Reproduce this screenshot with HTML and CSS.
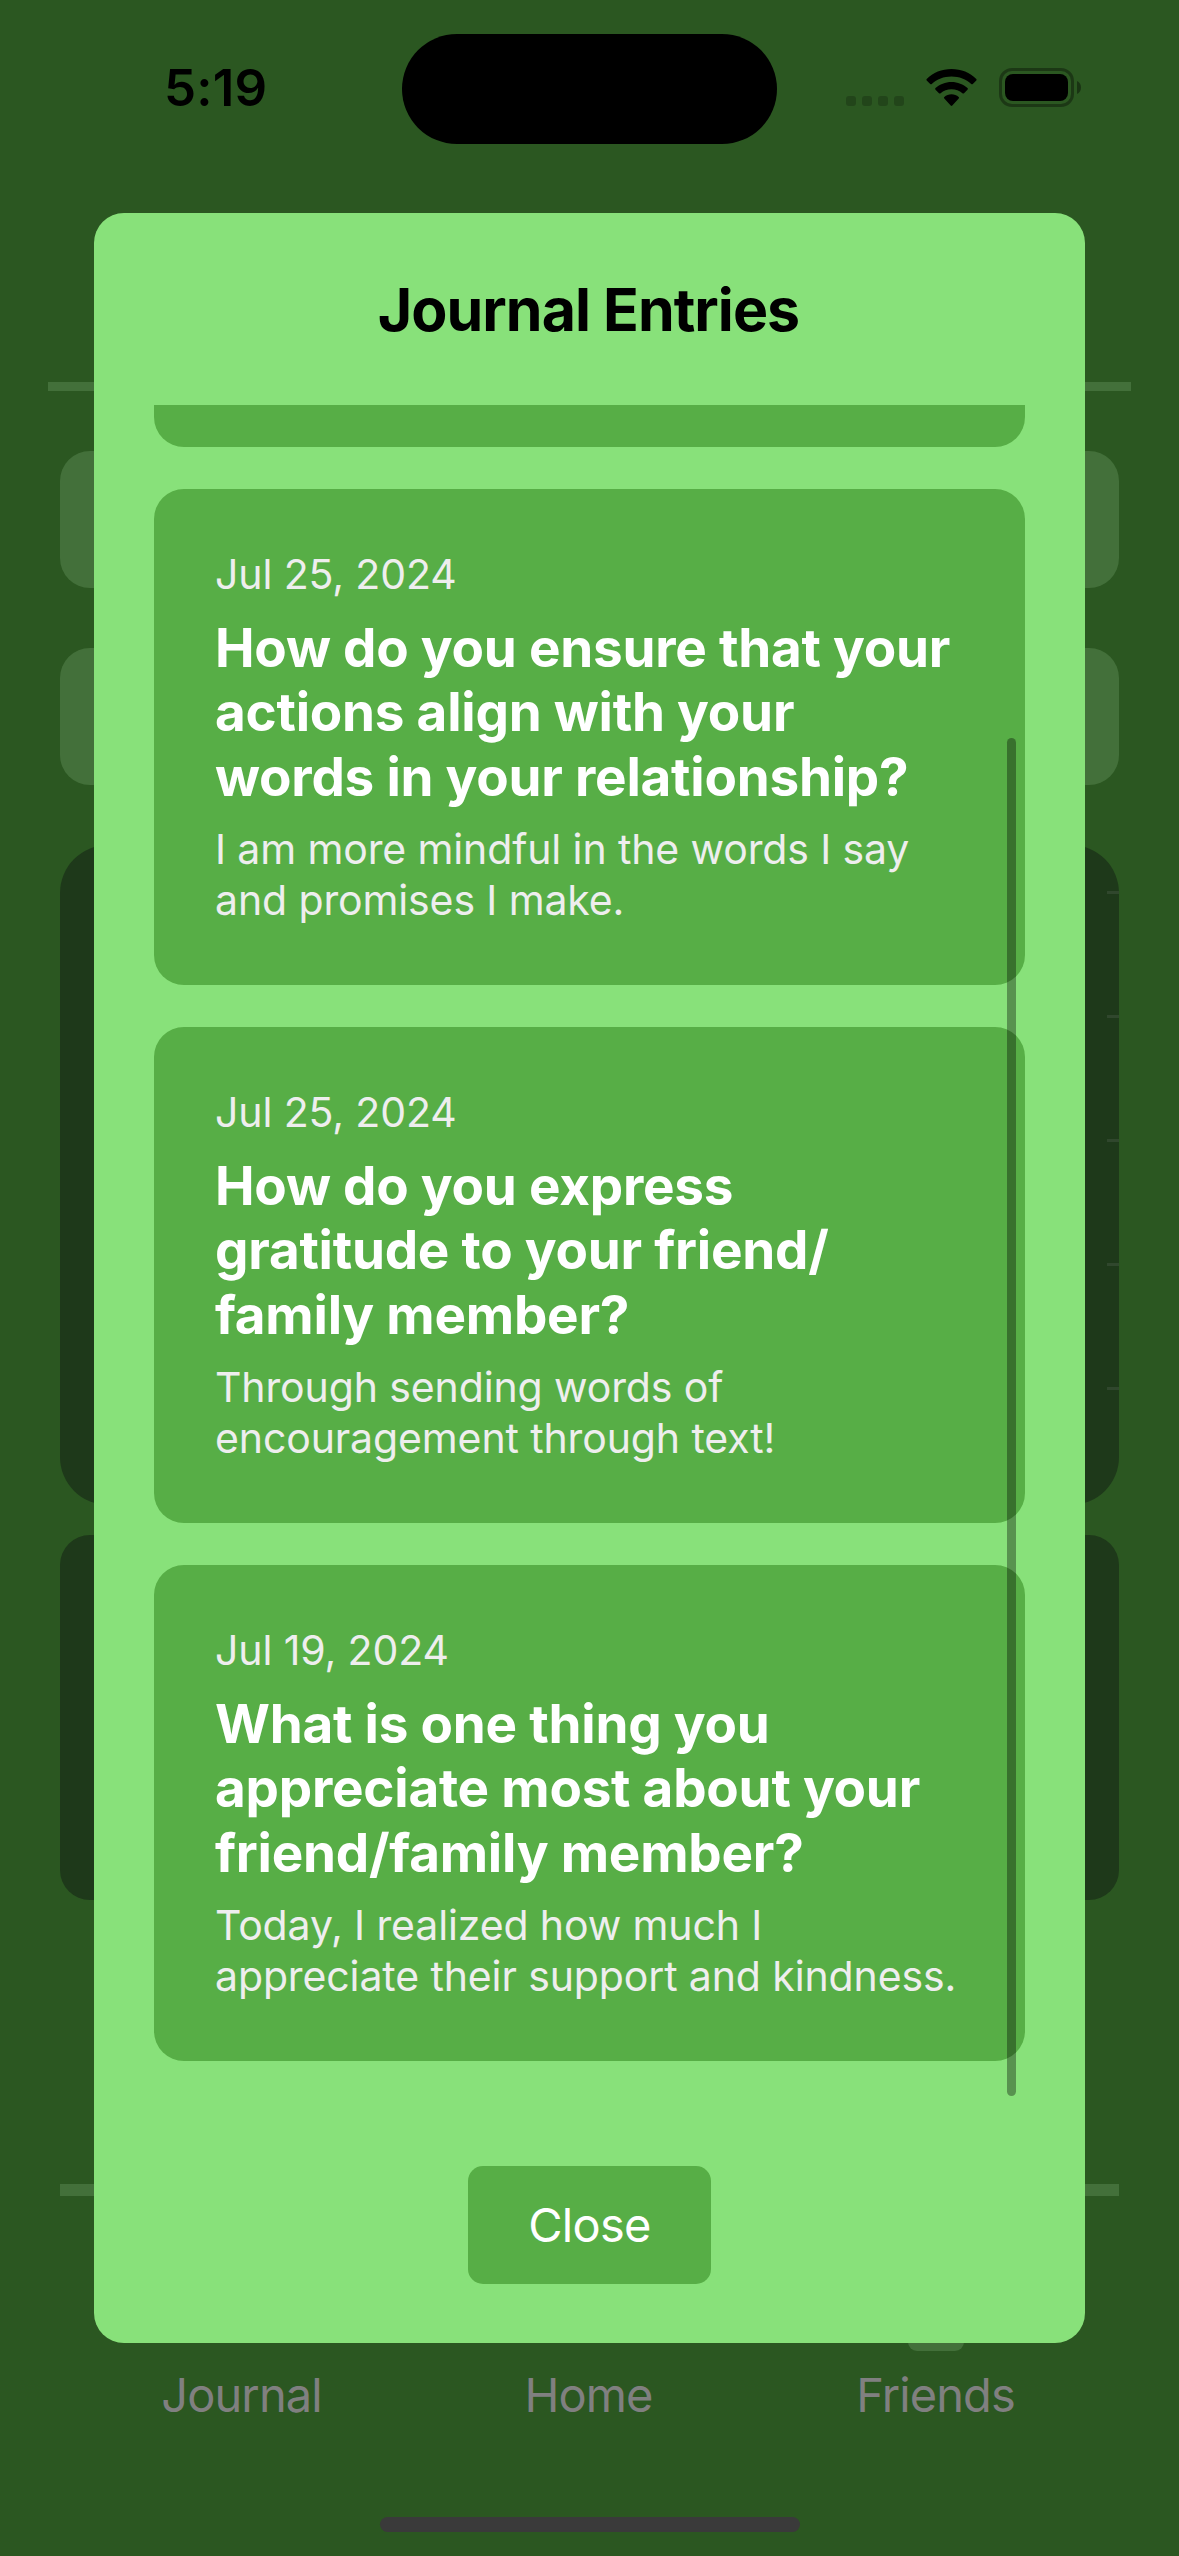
FILE: index.html
```
<!DOCTYPE html>
<html lang="en">
<head>
<meta charset="utf-8">
<title>Journal Entries</title>
<link rel="stylesheet" href="styles.css">
</head>
<body>
<div class="screen">
  <header class="status">
    <div class="status-time">5:19</div>
    <div class="island"></div>
    <div class="status-icons">
      <svg class="dots" width="58" height="10" viewBox="0 0 58 10"><rect width="10" height="10" rx="3"/><rect x="16" width="10" height="10" rx="3"/><rect x="32" width="10" height="10" rx="3"/><rect x="48" width="10" height="10" rx="3"/></svg>
      <svg class="wifi" width="51" height="38" viewBox="0 0 51 38">
        <path d="M25.5 0C35.2 0 44 3.7 50.300 9.900Q51 10.700 50.300 11.500L46.800 15Q46 15.700 45.200 15C40.100 10.200 33.200 7.500 25.500 7.500S10.900 10.200 5.800 15Q5 15.700 4.200 15L.7 11.500Q0 10.700.7 9.900C7 3.700 15.800 0 25.500 0Z"/>
        <path d="M25.500 12.900C31.700 12.900 37.300 15.200 41.500 19.100Q42.300 19.900 41.500 20.700L38 24.200Q37.200 24.900 36.400 24.200C33.500 21.700 29.700 20.200 25.500 20.200S17.500 21.700 14.600 24.200Q13.800 24.900 13 24.200L9.500 20.700Q8.700 19.900 9.500 19.100C13.700 15.200 19.300 12.900 25.500 12.900Z"/>
        <path d="M25.500 25.200C28.200 25.200 30.700 26.200 32.700 27.900Q33.500 28.700 32.700 29.500L26.300 36.600Q25.500 37.400 24.700 36.600L18.300 29.500Q17.500 28.700 18.300 27.900C20.300 26.200 22.800 25.200 25.500 25.200Z"/>
      </svg>
      <svg class="battery" width="82" height="39" viewBox="0 0 82 39">
        <rect class="battery-shell" x="1.500" y="1.500" width="72" height="36" rx="11.500"/>
        <path class="battery-tip" d="M78 13C80.500 14 82 16.500 82 19.500S80.500 25 78 26Z"/>
        <rect x="6" y="6" width="63" height="27" rx="8"/>
      </svg>
    </div>
  </header>

  <main class="page">
    <div class="rule rule-top"></div>
    <div class="field"></div>
    <div class="field"></div>
    <div class="chart"><i class="tick"></i><i class="tick"></i><i class="tick"></i><i class="tick"></i><i class="tick"></i></div>
    <div class="panel"></div>
    <div class="rule rule-bottom"></div>
  </main>

  <nav class="tabs">
    <div class="tab"><span>Journal</span></div>
    <div class="tab"><span>Home</span></div>
    <div class="tab"><i class="tab-icon"></i><span>Friends</span></div>
  </nav>
  <div class="home-indicator"></div>

  <section class="modal">
    <h1 class="modal-title">Journal Entries</h1>
    <div class="entries">
      <article class="entry entry-cut"></article>
      <article class="entry">
        <p class="date">Jul 25, 2024</p>
        <h2 class="question">How do you ensure that your<br>actions align with your<br>words in your relationship?</h2>
        <p class="answer">I am more mindful in the words I say<br>and promises I make.</p>
      </article>
      <article class="entry">
        <p class="date">Jul 25, 2024</p>
        <h2 class="question">How do you express<br>gratitude to your friend/<br>family member?</h2>
        <p class="answer">Through sending words of<br>encouragement through text!</p>
      </article>
      <article class="entry">
        <p class="date">Jul 19, 2024</p>
        <h2 class="question">What is one thing you<br>appreciate most about your<br>friend/family member?</h2>
        <p class="answer">Today, I realized how much I<br>appreciate their support and kindness.</p>
      </article>
      <div class="scrollbar"></div>
    </div>
    <button class="close">Close</button>
  </section>
</div>
</body>
</html>
```
FILE: styles.css
```
* { box-sizing: border-box; margin: 0; padding: 0; }
body { background: #2b5721; font-family: Inter, "Liberation Sans", sans-serif; }

.screen {
  position: relative;
  display: flex;
  flex-direction: column;
  width: 1179px;
  height: 2556px;
  overflow: hidden;
  background: #2b5721;
}

/* Status bar */
.status {
  display: grid;
  grid-template-columns: 401px 377px 401px;
  height: 382px;
  padding-top: 33px;
  align-items: start;
}
.status-time {
  padding: 25px 0 0 164px;
  font-size: 51px;
  font-weight: 600;
  line-height: 60px;
  letter-spacing: 0.2px;
}
.island { height: 110px; margin: 1px 1px 0; border-radius: 55px; background: #000; }
.status-icons { display: flex; align-items: flex-end; height: 74px; padding-left: 68px; }
.status-icons svg { display: block; flex: none; }
.dots { margin-bottom: 1px; opacity: 0.2; }
.wifi { margin-left: 22px; }
.battery { margin-left: 22px; }
.battery-shell { fill: none; stroke: #000; stroke-width: 3; opacity: 0.35; }
.battery-tip { opacity: 0.4; }

/* Dimmed page behind the dialog */
.page { display: flex; flex-direction: column; padding: 0 60px; }
.rule { background: #43703a; flex: none; }
.rule-top { height: 9px; margin: 0 -12px 60px; }
.rule-bottom { height: 12px; margin-top: 284px; }
.field { height: 137px; margin-bottom: 60px; border-radius: 30px; background: #43703a; }
.chart {
  display: flex;
  flex-direction: column;
  align-items: flex-end;
  gap: 121px;
  height: 660px;
  padding-top: 46px;
  border-radius: 48px;
  background: #1e391a;
}
.tick { width: 12px; height: 3px; background: #30472d; }
.panel { height: 365px; margin-top: 30px; border-radius: 30px; background: #1e391a; }

.tabs {
  display: grid;
  grid-template-columns: repeat(3, 347px);
  justify-content: center;
  height: 321px;
  padding-right: 2px;
  color: #808080;
  font-size: 47px;
  line-height: 60px;
  letter-spacing: -0.9px;
}
.tab { display: flex; flex-direction: column; align-items: center; justify-content: flex-end; height: 229px; }
.tab-icon { width: 56px; height: 40px; margin-bottom: 14px; border-radius: 9px; background: #43703a; }
.home-indicator { width: 420px; height: 15px; margin: 0 auto; border-radius: 8px; background: #3a3a3a; }

/* Dialog */
.modal {
  position: absolute;
  left: 94px;
  top: 213px;
  display: flex;
  flex-direction: column;
  align-items: center;
  width: 991px;
  height: 2130px;
  padding: 60px 60px 59px;
  border-radius: 30px;
  background: #88e17a;
}
.modal-title {
  flex: none;
  height: 132px;
  padding-right: 2px;
  font-size: 59px;
  line-height: 74px;
  font-weight: 700;
  letter-spacing: -0.95px;
  white-space: nowrap;
}
.entries {
  position: relative;
  flex: none;
  display: flex;
  flex-direction: column;
  gap: 42px;
  width: 871px;
  height: 1701px;
  overflow: hidden;
}
.entry {
  flex: none;
  height: 496px;
  padding: 60px 0 0 61px;
  border-radius: 30px;
  background: #57ae46;
  color: #fff;
  white-space: nowrap;
}
.entry-cut { height: 42px; padding: 0; border-radius: 0 0 30px 30px; }
.date, .answer { color: #eee; font-size: 41px; line-height: 51px; letter-spacing: -0.12px; }
.date { margin-bottom: 16px; }
.question { margin-bottom: 15px; font-size: 53px; line-height: 64.4px; font-weight: 700; letter-spacing: -0.23px; }
.scrollbar {
  position: absolute;
  right: 9px;
  top: 333px;
  width: 9px;
  height: 1358px;
  border-radius: 5px;
  background: rgba(0, 0, 0, 0.35);
}
.close {
  flex: none;
  width: 243px;
  height: 118px;
  margin-top: 60px;
  border: 0;
  border-radius: 15px;
  background: #57ae46;
  color: #fff;
  font: 400 47px/58px Inter, "Liberation Sans", sans-serif;
  letter-spacing: -0.7px;
}
```
